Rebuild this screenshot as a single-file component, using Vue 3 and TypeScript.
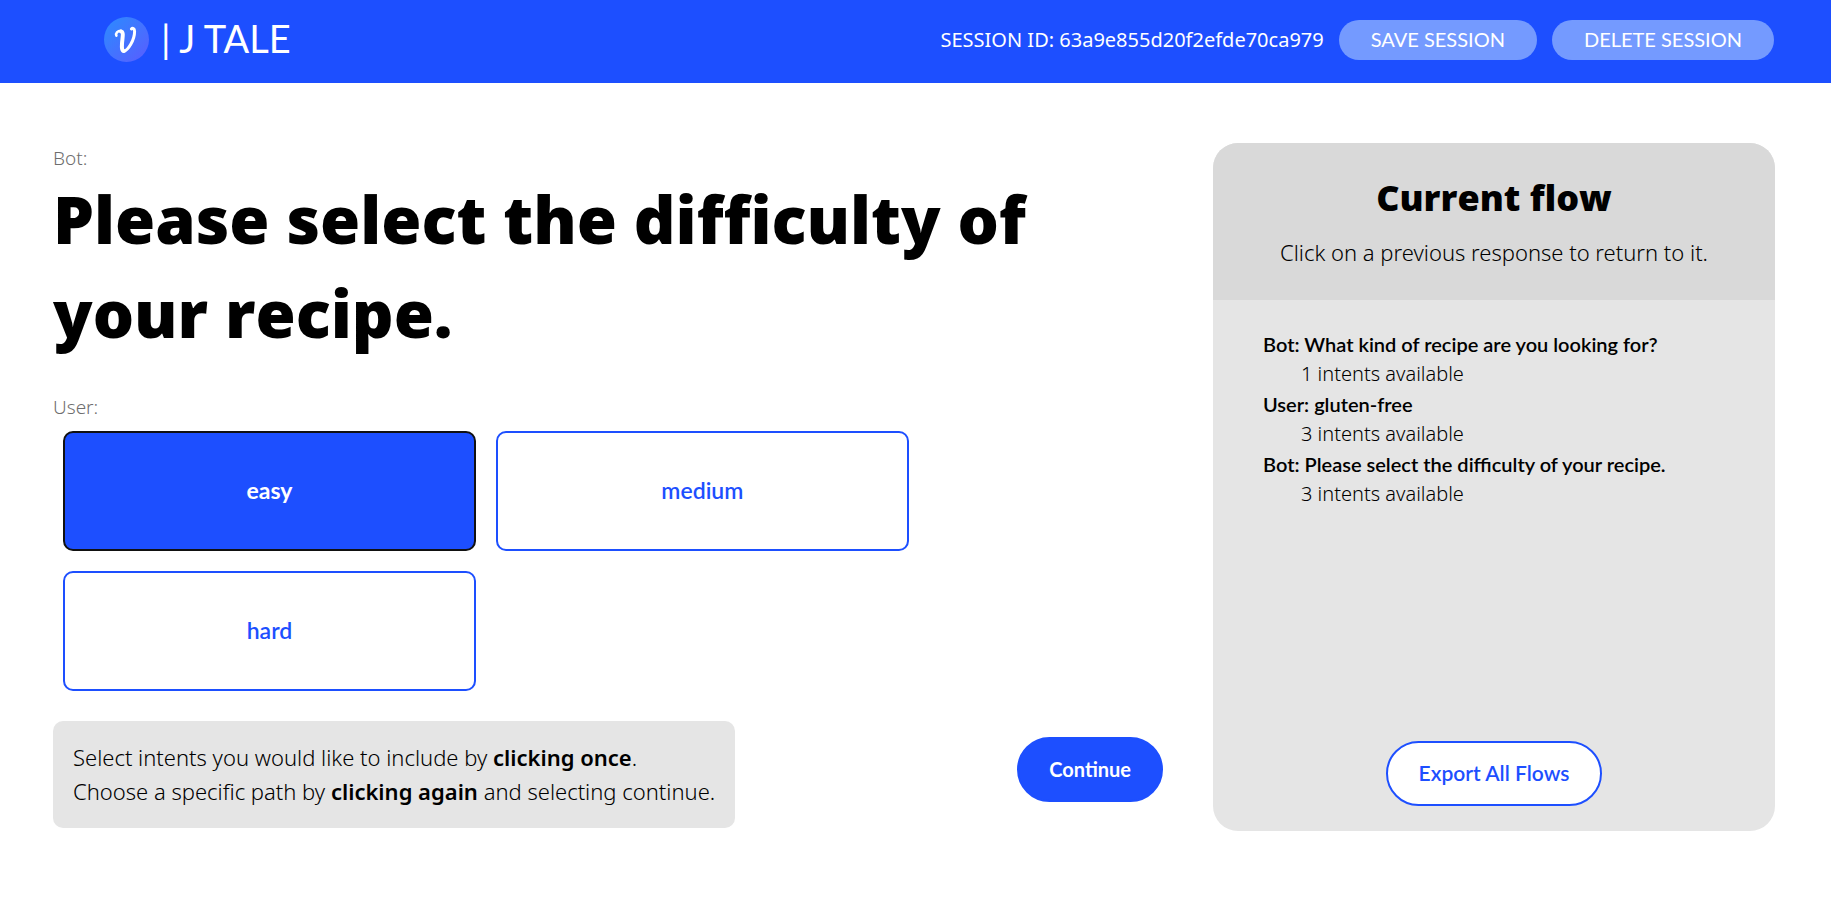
<script setup lang="ts">
import { ref } from 'vue'

interface FlowEntry {
  speaker: string
  text: string
  intents: number
}

const sessionId = '63a9e855d20f2efde70ca979'
const intents = ['easy', 'medium', 'hard']
const selected = ref('easy')

const flow: FlowEntry[] = [
  { speaker: 'Bot', text: 'What kind of recipe are you looking for?', intents: 1 },
  { speaker: 'User', text: 'gluten-free', intents: 3 },
  { speaker: 'Bot', text: 'Please select the difficulty of your recipe.', intents: 3 },
]
</script>

<template>
  <header class="topbar">
    <div class="brand">
      <svg class="logo" viewBox="0 0 45 45" aria-hidden="true">
        <defs>
          <linearGradient id="logo-fill" x1="0" y1="0" x2="1" y2="1">
            <stop offset="0" stop-color="#2b8cff" />
            <stop offset="1" stop-color="#5a5cff" />
          </linearGradient>
        </defs>
        <circle cx="22.5" cy="22.5" r="22.5" fill="url(#logo-fill)" />
        <g fill="none" stroke="#fff" stroke-linecap="round" stroke-linejoin="round">
          <path stroke-width="2.6" d="M12.4 18.6C11.2 16.4 13.6 13.8 16.8 13.8" />
          <path stroke-width="4" d="M17 14.6C20 15 18.4 21 18 26.5C17.7 31 18 34 19.8 34" />
          <path stroke-width="3" d="M19.8 34.2C24 33.5 30.6 23 30.6 14.5C30.6 11.3 28.5 10.8 27.4 12" />
        </g>
      </svg>
      <span class="brand-name">| J TALE</span>
    </div>
    <div class="session">
      <span>SESSION ID: {{ sessionId }}</span>
      <button type="button" class="session-btn">SAVE SESSION</button>
      <button type="button" class="session-btn">DELETE SESSION</button>
    </div>
  </header>

  <main class="page">
    <section class="dialog">
      <p class="speaker">Bot:</p>
      <h1 class="prompt">Please select the difficulty of your recipe.</h1>
      <p class="speaker user">User:</p>
      <div class="cards">
        <button
          v-for="intent in intents"
          :key="intent"
          type="button"
          class="card"
          :class="{ selected: intent === selected }"
          @click="selected = intent"
        >
          {{ intent }}
        </button>
      </div>
      <div class="actions">
        <p class="hint">
          Select intents you would like to include by <strong>clicking once</strong>.<br />
          Choose a specific path by <strong>clicking again</strong> and selecting continue.
        </p>
        <button type="button" class="pill continue">Continue</button>
      </div>
    </section>

    <aside class="panel">
      <div class="panel-head">
        <h2 class="panel-title">Current flow</h2>
        <p class="panel-sub">Click on a previous response to return to it.</p>
      </div>
      <ul class="flow">
        <li v-for="entry in flow" :key="entry.text">
          <button type="button" class="flow-entry">{{ entry.speaker }}: {{ entry.text }}</button>
          <p class="flow-count">{{ entry.intents }} intents available</p>
        </li>
      </ul>
      <button type="button" class="pill export">Export All Flows</button>
    </aside>
  </main>
</template>

<style>
body {
  margin: 0;
  background: #fff;
}
</style>

<style scoped>
h1,
h2,
p,
ul {
  margin: 0;
  padding: 0;
}

button {
  box-sizing: border-box;
  cursor: pointer;
  font-family: Lato, sans-serif;
}

.topbar {
  box-sizing: border-box;
  display: flex;
  align-items: center;
  justify-content: space-between;
  padding: 0 57px 4px 104px;
  height: 83px;
  background: #1d4fff;
  color: #fff;
  font-family: "Noto Sans", sans-serif;
  font-size: 20px;
}

.brand {
  display: flex;
  align-items: center;
  gap: 12px;
}

.logo {
  width: 45px;
  height: 45px;
}

.brand-name {
  padding-bottom: 3px;
  font-family: Lato, sans-serif;
  font-size: 38px;
  line-height: 56px;
  white-space: nowrap;
}

.session {
  display: flex;
  align-items: center;
  gap: 15px;
  white-space: nowrap;
}

.session-btn {
  height: 40px;
  padding: 0 32px 2px;
  border: 0;
  border-radius: 20px;
  background: #749aff;
  color: #fff;
  font-size: 20px;
}

.page {
  display: grid;
  grid-template-columns: minmax(0, 1110fr) minmax(0, 562fr);
  gap: 50px;
  padding: 60px 56px 60px 53px;
  color: #000;
  font-family: "Noto Sans", sans-serif;
}

.speaker {
  padding-top: 2px;
  color: #6e6e6e;
  font-size: 19px;
  font-weight: 300;
  line-height: 27px;
}

.speaker.user {
  margin-top: 32px;
}

.prompt {
  font-family: "Open Sans", sans-serif;
  font-size: 65px;
  font-weight: 800;
  line-height: 94px;
}

.cards {
  box-sizing: border-box;
  display: grid;
  grid-template-columns: 1fr 1fr;
  gap: 20px;
  width: 78%;
  padding: 10px;
}

.card {
  height: 120px;
  padding: 0 20px 2px;
  border: 2px solid #1d4fff;
  border-radius: 10px;
  background: #fff;
  color: #1d4fff;
  font-size: 23px;
  font-weight: 600;
}

.card.selected {
  border-color: #111;
  background: #1d4fff;
  color: #fff;
  font-weight: 700;
}

.actions {
  display: flex;
  align-items: flex-start;
  justify-content: space-between;
  padding: 20px 0 3px;
}

.hint {
  padding: 19px 20px 20px;
  border-radius: 10px;
  background: #e5e5e5;
  font-size: 22px;
  font-weight: 300;
  line-height: 34px;
}

.hint strong {
  font-weight: 600;
}

.pill {
  height: 65px;
  padding: 0 31px 3px;
  border: 2px solid #1d4fff;
  border-radius: 33px;
  font-size: 21px;
  font-weight: 600;
}

.continue {
  margin-top: 16px;
  padding: 0 30px 2px;
  background: #1d4fff;
  color: #fff;
  font-size: 20px;
  font-weight: 700;
}

.export {
  align-self: center;
  margin-top: auto;
  background: #fff;
  color: #1d4fff;
}

.panel {
  box-sizing: border-box;
  display: flex;
  flex-direction: column;
  padding-bottom: 25px;
  overflow: hidden;
  border-radius: 25px;
  background: #e5e5e5;
}

.panel-head {
  padding: 31px 20px 30px;
  background: #d9d9d9;
  text-align: center;
}

.panel-title {
  font-family: "Open Sans", sans-serif;
  font-size: 36px;
  font-weight: 800;
  line-height: 48px;
}

.panel-sub {
  margin-top: 12px;
  font-size: 22px;
  font-weight: 300;
  line-height: 36px;
}

.flow {
  padding: 29px 50px;
  list-style: none;
}

.flow-entry {
  display: block;
  padding: 0;
  border: 0;
  background: none;
  color: #000;
  font-size: 20px;
  font-weight: 600;
  line-height: 30px;
  text-align: left;
}

.flow-count {
  padding-left: 38px;
  font-size: 20px;
  font-weight: 300;
  line-height: 30px;
}
</style>
